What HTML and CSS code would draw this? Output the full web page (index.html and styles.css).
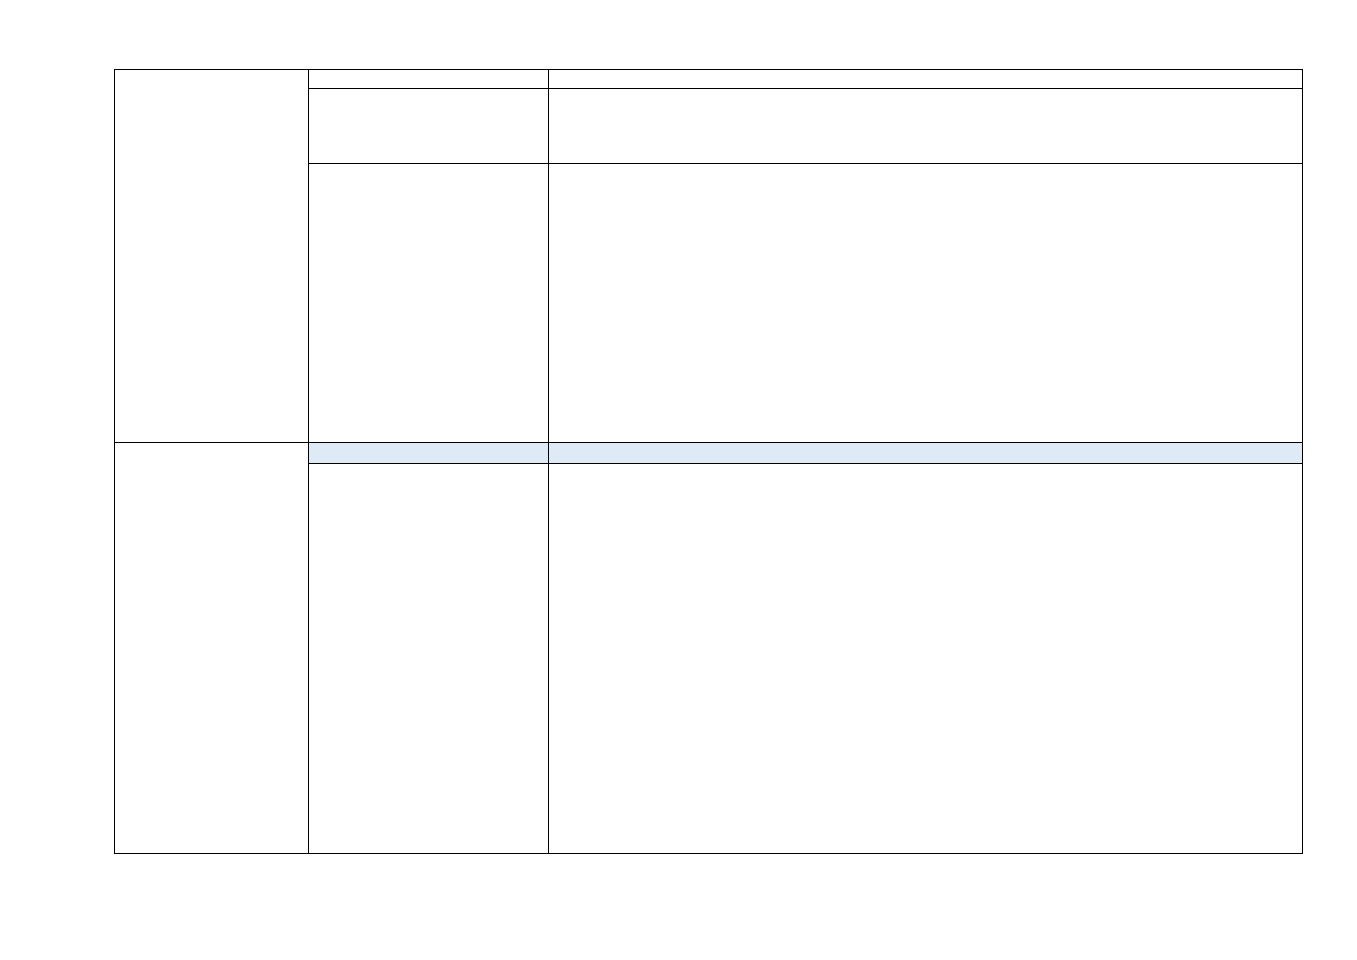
FILE: index.html
```html
<!DOCTYPE html>
<html lang="en">
<head>
  <meta charset="UTF-8" />
  <meta name="viewport" content="width=device-width, initial-scale=1" />
  <title>Table</title>
  <link rel="stylesheet" href="styles.css">
</head>
<body>
  <div class="page">
    <div class="sheet" role="table">
      <div class="cell group group-one"></div>
      <div class="cell"></div>
      <div class="cell"></div>
      <div class="cell"></div>
      <div class="cell"></div>
      <div class="cell"></div>
      <div class="cell"></div>

      <div class="cell group group-two"></div>
      <div class="cell shaded"></div>
      <div class="cell shaded"></div>
      <div class="cell"></div>
      <div class="cell"></div>
    </div>
  </div>
</body>
</html>
```

FILE: styles.css
```css
:root {
  --color-line: #000000;
  --color-bg: #ffffff;
  --color-shade: #deeaf6;
}

*, *::before, *::after {
  box-sizing: border-box;
}
body {
  margin: 0;
  background: var(--color-bg);
  font-family: "Liberation Sans", Arial, sans-serif;
}

.page {
  padding: 69px 0 0 114px;
}

/* 1px gaps over a black fill draw the rules */
.sheet {
  display: grid;
  grid-template-columns: 193px 239px 753px;
  grid-template-rows: 18px 74px 278px 20px 389px;
  gap: 1px;
  padding: 1px;
  width: 1189px;
  background: var(--color-line);
}
.cell {
  background: var(--color-bg);
}
.group {
  grid-column: 1;
}
.group-one {
  grid-row: 1 / span 3;
}
.group-two {
  grid-row: 4 / span 2;
}
.shaded {
  background: var(--color-shade);
}
```
